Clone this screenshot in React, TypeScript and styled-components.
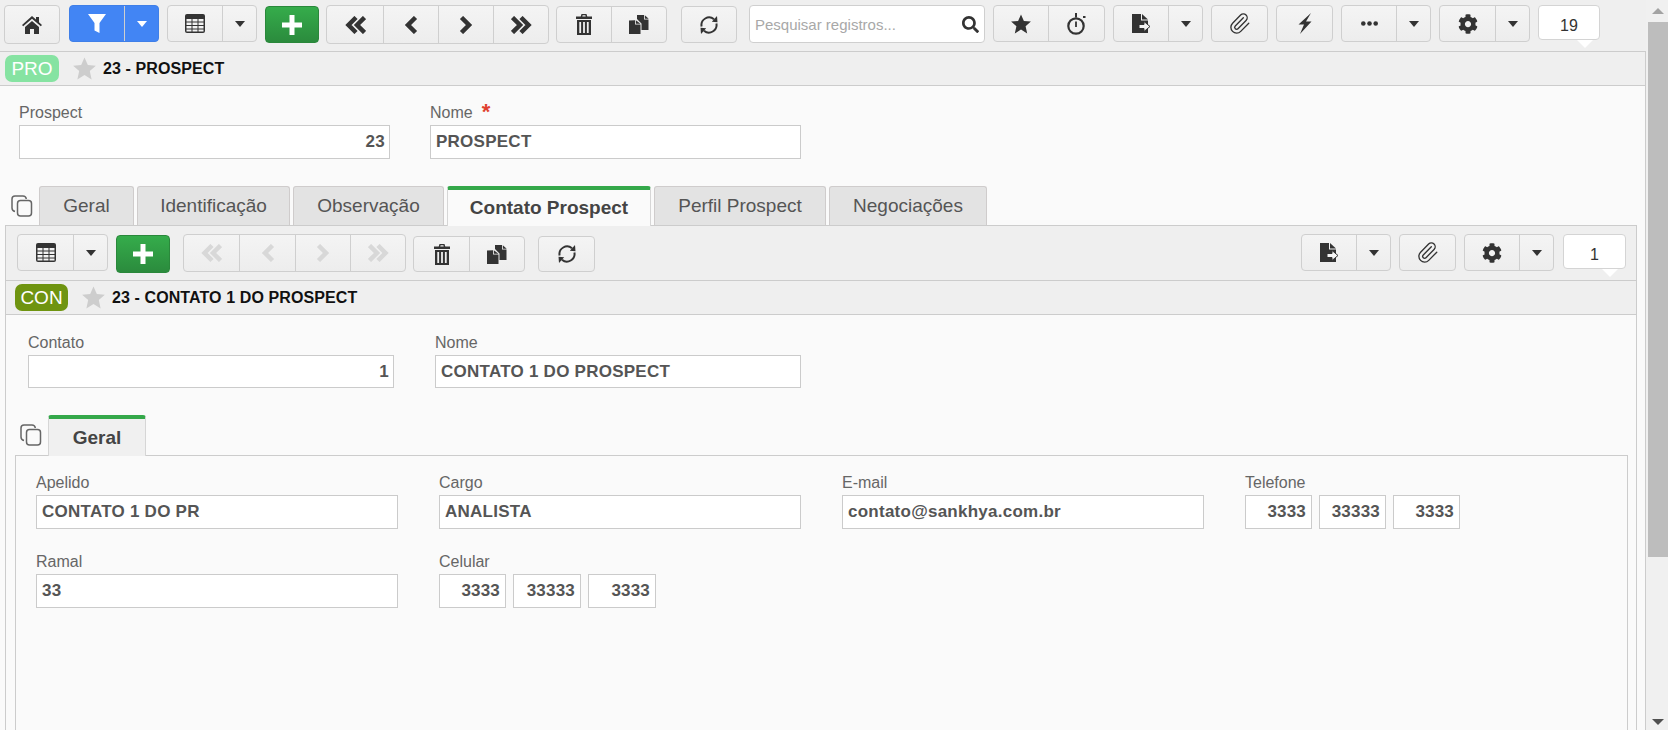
import React from "react";
import styled, { createGlobalStyle } from "styled-components";
import { FaSearch, FaCog } from "react-icons/fa";
import { Paperclip } from "lucide-react";

const GlobalStyle = createGlobalStyle`
  html, body { margin: 0; padding: 0; height: 730px; overflow: hidden; background: #fafafa; }
  body { font-family: "Liberation Sans", Arial, sans-serif; }
  * { box-sizing: border-box; }
`;

const Page = styled.div`
  display: flex;
  width: 1668px;
  height: 730px;
  overflow: hidden;
  background: #fafafa;
`;
const Main = styled.div`
  width: 1646px;
  height: 730px;
  display: flex;
  flex-direction: column;
  flex: none;
`;
const Scrollbar = styled.div`
  flex: 1;
  display: flex;
  flex-direction: column;
  align-items: center;
  background: #f0f0f0;
  padding: 8px 0 5px 2px;
`;
const ScrollArrow = styled.div<{ $down?: boolean }>`
  width: 0;
  height: 0;
  border-left: 6px solid transparent;
  border-right: 6px solid transparent;
  ${(p) => (p.$down ? "border-top: 6px solid #505050; margin-top: auto;" : "border-bottom: 6px solid #a3a3a3;")}
`;
const ScrollThumb = styled.div`
  width: 100%;
  height: 535px;
  margin-top: 8px;
  background: #bdbdbd;
`;

const Toolbar = styled.div`
  height: 51px;
  flex: none;
  display: flex;
  align-items: flex-start;
  background: #efefef;
  padding-left: 4px;
`;
const SubToolbar = styled.div`
  height: 54px;
  flex: none;
  display: flex;
  align-items: flex-start;
  background: #efefef;
  padding: 0 10px 0 0;
`;
const Group = styled.div<{ $ml: number; $top: number; $h: number }>`
  display: flex;
  flex: none;
  margin-left: ${(p) => p.$ml}px;
  margin-top: ${(p) => p.$top}px;
  height: ${(p) => p.$h}px;
  border: 1px solid #cfcfcf;
  border-radius: 4px;
  background: linear-gradient(#f4f4f4, #ededed);
  overflow: hidden;
`;
const PrimaryGroup = styled(Group)`
  background: #4285f4;
  border-color: #3f7fe8;
`;
const AddGroup = styled(Group)`
  background: linear-gradient(#35ac4b, #2b8b3d);
  border-color: #2a883b;
`;
const Cell = styled.div<{ $w: number; $line?: string }>`
  width: ${(p) => p.$w}px;
  display: flex;
  align-items: center;
  justify-content: center;
  color: #333;
  & + & { border-left: 1px solid ${(p) => p.$line || "#cfcfcf"}; }
`;
const Caret = styled.span<{ $light?: boolean }>`
  width: 0;
  height: 0;
  margin-top: 1px;
  border-left: 5.5px solid transparent;
  border-right: 5.5px solid transparent;
  border-top: 6px solid ${(p) => (p.$light ? "#fff" : "#333")};
`;
const SearchBox = styled.div<{ $ml: number }>`
  width: 236px;
  height: 38px;
  margin: 5px 0 0 ${(p) => p.$ml}px;
  flex: none;
  display: flex;
  align-items: center;
  padding: 0 5px;
  background: #fff;
  border: 1px solid #cfcfcf;
  border-radius: 4px;
  color: #333;
`;
const SearchInput = styled.input`
  flex: 1;
  min-width: 0;
  border: 0;
  outline: 0;
  padding: 0;
  background: transparent;
  font: 15px "Liberation Sans", Arial, sans-serif;
  &::placeholder { color: #a8a8a8; opacity: 1; }
`;
const Counter = styled.div<{ $ml: number; $w: number; $tip: number; $top: number }>`
  position: relative;
  flex: none;
  width: ${(p) => p.$w}px;
  height: 35px;
  margin: ${(p) => p.$top}px 0 0 ${(p) => p.$ml}px;
  padding-top: 7px;
  display: flex;
  align-items: center;
  justify-content: center;
  background: #fff;
  border: 1px solid #d4d4d4;
  border-radius: 4px;
  color: #333;
  font-size: 16px;
  &::after {
    content: "";
    position: absolute;
    left: ${(p) => p.$tip}px;
    bottom: -9px;
    width: 0;
    height: 0;
    border-left: 8px solid transparent;
    border-right: 8px solid transparent;
    border-top: 8px solid #fff;
  }
`;
const Spacer = styled.div`
  flex: 1;
`;

const Content = styled.div`
  flex: 1;
  min-height: 0;
  display: flex;
  flex-direction: column;
  border-right: 1px solid #ccc;
`;
const TitleBar = styled.div<{ $pl: number }>`
  height: 35px;
  flex: none;
  display: flex;
  align-items: center;
  padding-left: ${(p) => p.$pl}px;
  background: #efefef;
  border-top: 1px solid #ccc;
  border-bottom: 1px solid #ccc;
`;
const Badge = styled.span<{ $bg: string; $w: number }>`
  width: ${(p) => p.$w}px;
  height: 27px;
  flex: none;
  display: flex;
  align-items: center;
  justify-content: center;
  border-radius: 7px;
  background: ${(p) => p.$bg};
  color: #fff;
  font-size: 19px;
`;
const TitleStar = styled.span`
  display: flex;
  margin: 0 7px 0 14px;
  color: #cdcdcd;
`;
const Title = styled.span`
  font-size: 16px;
  font-weight: 700;
  color: #111;
  letter-spacing: 0.1px;
  white-space: nowrap;
`;
const FormRow = styled.div<{ $pl: number; $pt: number; $gap: number }>`
  flex: none;
  display: flex;
  gap: ${(p) => p.$gap}px;
  padding: ${(p) => p.$pt}px 0 27px ${(p) => p.$pl}px;
`;
const Field = styled.div<{ $w?: number }>`
  display: flex;
  flex-direction: column;
  ${(p) => (p.$w ? `width: ${p.$w}px;` : "")}
`;
const Label = styled.label`
  height: 19px;
  font-size: 16px;
  line-height: 14px;
  color: #666;
  white-space: nowrap;
`;
const Required = styled.span`
  margin-left: 9px;
  color: #e0402f;
  font-size: 22px;
  line-height: 12px;
  font-weight: 700;
  vertical-align: -1px;
`;
const TextInput = styled.input<{ $h?: number; $right?: boolean }>`
  width: 100%;
  height: ${(p) => p.$h || 34}px;
  padding: 0 4px 0 5px;
  border: 1px solid #cbcbcb;
  outline: 0;
  background: #fff;
  color: #555;
  font: 700 17px "Liberation Sans", Arial, sans-serif;
  letter-spacing: 0.25px;
  text-align: ${(p) => (p.$right ? "right" : "left")};
`;
const PhoneGroup = styled.div`
  display: flex;
  gap: 7px;
`;
const PhoneInput = styled(TextInput)<{ $w?: number }>`
  width: ${(p) => p.$w || 67}px;
  padding: 0 5px;
  letter-spacing: 0.2px;
`;
const TabBar = styled.div<{ $pl: number; $h: number }>`
  height: ${(p) => p.$h}px;
  flex: none;
  display: flex;
  align-items: flex-start;
  gap: 3px;
  padding-left: ${(p) => p.$pl}px;
  position: relative;
  z-index: 1;
`;
const TabsIcon = styled.span`
  display: flex;
  width: 25px;
  margin: 9px 0 0 0;
  color: #666;
`;
const Tab = styled.div<{ $w: number; $h: number; $active?: boolean; $activeBg?: string }>`
  width: ${(p) => p.$w}px;
  height: ${(p) => (p.$active ? p.$h + 1 : p.$h)}px;
  flex: none;
  display: flex;
  align-items: center;
  justify-content: center;
  font-size: 19px;
  color: ${(p) => (p.$active ? "#444" : "#555")};
  font-weight: ${(p) => (p.$active ? 700 : 400)};
  background: ${(p) => (p.$active ? p.$activeBg || "#fafafa" : "#e3e3e3")};
  border: 1px solid ${(p) => (p.$active ? "#d6d6d6" : "#cfcccc")};
  border-bottom: 0;
  border-top: ${(p) => (p.$active ? "4px solid #34a84a" : "1px solid #cfcccc")};
  border-radius: 3px 3px 0 0;
`;
const Panel = styled.div`
  flex: 1;
  min-height: 0;
  display: flex;
  flex-direction: column;
  margin: 0 8px 0 5px;
  border: 1px solid #ccc;
  border-bottom: 0;
`;
const InnerPanel = styled.div`
  flex: 1;
  min-height: 0;
  margin: 0 8px 0 9px;
  padding: 20px 0 0 20px;
  border: 1px solid #ccc;
  border-bottom: 0;
  display: grid;
  grid-template-columns: repeat(4, 362px);
  grid-auto-rows: min-content;
  gap: 26px 41px;
`;

const Ico = styled.svg`
  display: block;
  flex: none;
`;

const HomeIcon = () => (
  <Ico width="20" height="18" viewBox="0 0 20 18">
    <path fill="#333" d="M10 0l4 3.500V1h3v5.300l3 2.700-1.200 1.300L10 2.700 1.200 10.300 0 9z" />
    <path fill="#333" d="M3 11l7-6 7 6v7h-5v-5H8v5H3z" />
  </Ico>
);
const Star = ({ size, color }: { size: number; color: string }) => (
  <Ico width={size} height={size} viewBox="0 0 20 20">
    <path fill={color} d="M10 0.500 12.900 7 19.900 7.600 14.600 12.200 16.200 19.500 10 15.600 3.800 19.500 5.400 12.200 0.100 7.600 7.100 7z" />
  </Ico>
);
const Bolt = () => (
  <Ico width="14" height="21" viewBox="0 0 14 21">
    <path fill="#333" d="M13 0 0.500 11.500h5.500L2 21 13.500 8.500H8z" />
  </Ico>
);
const Funnel = () => (
  <Ico width="18" height="19" viewBox="0 0 18 19"><path fill="#fff" d="M0 0h18l-6.500 9v10l-5-2.500V9z" /></Ico>
);
const TableIcon = () => (
  <Ico width="20" height="19" viewBox="0 0 20 19">
    <rect x="0" y="0" width="20" height="19" rx="2" fill="#333" />
    <path fill="#f2f2f2" d="M1.500 5h5v2.500h-5zM7.500 5h5v2.500h-5zM13.500 5h5v2.500h-5zM1.500 8.500h5V11h-5zM7.500 8.500h5V11h-5zM13.500 8.500h5V11h-5zM1.500 12h5v2.500h-5zM7.500 12h5v2.500h-5zM13.500 12h5v2.500h-5zM1.500 15.500h5V17.500h-5zM7.500 15.500h5V17.500h-5zM13.500 15.500h5V17.500h-5z" />
  </Ico>
);
const Plus = () => (
  <Ico width="20" height="20" viewBox="0 0 20 20"><path fill="#fff" d="M7.500 0h5v7.500H20v5h-7.500V20h-5v-7.500H0v-5h7.500z" /></Ico>
);
const Chevrons = ({ dir, double, color }: { dir: "l" | "r"; double?: boolean; color: string }) => (
  <Ico
    width={double ? 21 : 14}
    height="18"
    viewBox={double ? "0 0 21 18" : "0 0 14 18"}
    style={dir === "r" ? { transform: "scaleX(-1)" } : undefined}
    fill="none"
    stroke={color}
    strokeWidth="4.500"
  >
    {double ? (
      <>
        <path d="M11 1.500 3.500 9l7.500 7.500" />
        <path d="M19.500 1.500 12 9l7.500 7.500" />
      </>
    ) : (
      <path d="M11.500 1.500 4 9l7.500 7.500" />
    )}
  </Ico>
);
const Trash = () => (
  <Ico width="16" height="21" viewBox="0 0 16 21">
    <path fill="#333" d="M5.500 0h5l.8 2.500H16V5H0V2.500h4.700zM6.600 1.200l-.3 1.300h3.400l-.3-1.300zM1 6h14v15H1zM3.300 8v11h1.800V8zM7.100 8v11h1.800V8zM10.900 8v11h1.800V8z" fillRule="evenodd" />
  </Ico>
);
const Files = () => (
  <Ico width="20" height="19" viewBox="0 0 20 19">
    <path fill="#333" d="M8 0h7v4.500h4.500V15H12.500V8.500L8 4z" />
    <path fill="#333" d="M15.800 0.200 19.700 3.700h-3.900z" />
    <path fill="#333" d="M0 5.500 6 5.200V9.500h5.500V19H0z" />
    <path fill="#333" d="M6.800 5.200 11.500 8.800h-4.700z" />
  </Ico>
);
const Refresh = () => (
  <Ico width="20" height="20" viewBox="0 0 20 20" fill="none">
    <path stroke="#333" strokeWidth="2" d="M2.600 11.500A7.600 7.600 0 0 1 15 4.300" />
    <path fill="#333" d="M12.800 6.800 18.500 7.200 18 1z" />
    <path stroke="#333" strokeWidth="2" d="M17.400 8.500A7.600 7.600 0 0 1 5 15.700" />
    <path fill="#333" d="M7.200 13.200 1.500 12.800 2 19z" />
  </Ico>
);
const Stopwatch = () => (
  <Ico width="19" height="22" viewBox="0 0 19 22" fill="none">
    <circle cx="9" cy="13" r="7.700" stroke="#333" strokeWidth="2.200" />
    <path stroke="#333" strokeWidth="2" d="M9 0v4.500" />
    <path stroke="#333" strokeWidth="1.800" d="M9 8.500v5.500" />
    <path fill="#333" d="M16 3l2.500 0 0 2-2.500 0z" />
  </Ico>
);
const ExportFile = () => (
  <Ico width="19" height="19" viewBox="0 0 19 19">
    <path fill="#333" d="M0 0h9v6.500h7V19H0z" />
    <path fill="#333" d="M10 0l6 5.500h-6z" />
    <path fill="#f4f4f4" stroke="#333" strokeWidth="1" d="M7 10.500h5V7.500l6 5-6 5v-3H7z" />
  </Ico>
);
const Dots = () => (
  <Ico width="17" height="5" viewBox="0 0 17 5">
    <circle cx="2.300" cy="2.500" r="2.300" fill="#333" />
    <circle cx="8.500" cy="2.500" r="2.300" fill="#333" />
    <circle cx="14.700" cy="2.500" r="2.300" fill="#333" />
  </Ico>
);
const CopyTabs = () => (
  <Ico width="22" height="22" viewBox="0 0 22 22" fill="none" stroke="#666" strokeWidth="1.500">
    <rect x="6.500" y="5.500" width="14" height="15.500" rx="3" />
    <path d="M4 16.500C2 16 1 15 1 13V4c0-2 1-3 3-3h8c2 0 3 1 3.300 3" />
  </Ico>
);

const clipIcon = <Paperclip size={23} strokeWidth={1.4} color="#333" />;
const D = "#d8d8d8";

export default function App() {
  return (
    <Page>
      <GlobalStyle />
      <Main>
        <Toolbar>
          <Group $ml={0} $top={5} $h={39}><Cell $w={54}><HomeIcon /></Cell></Group>
          <PrimaryGroup $ml={9} $top={5} $h={37}>
            <Cell $w={54} $line="#3272dd"><Funnel /></Cell>
            <Cell $w={34} $line="#3272dd"><Caret $light /></Cell>
          </PrimaryGroup>
          <Group $ml={8} $top={5} $h={37}>
            <Cell $w={54}><TableIcon /></Cell>
            <Cell $w={34}><Caret /></Cell>
          </Group>
          <AddGroup $ml={8} $top={6} $h={37}><Cell $w={52}><Plus /></Cell></AddGroup>
          <Group $ml={7} $top={5} $h={39}>
            <Cell $w={56}><Chevrons dir="l" double color="#333" /></Cell>
            <Cell $w={55}><Chevrons dir="l" color="#333" /></Cell>
            <Cell $w={55}><Chevrons dir="r" color="#333" /></Cell>
            <Cell $w={55}><Chevrons dir="r" double color="#333" /></Cell>
          </Group>
          <Group $ml={7} $top={6} $h={37}>
            <Cell $w={54}><Trash /></Cell>
            <Cell $w={55}><Files /></Cell>
          </Group>
          <Group $ml={14} $top={6} $h={37}><Cell $w={54}><Refresh /></Cell></Group>
          <SearchBox $ml={12}>
            <SearchInput placeholder="Pesquisar registros..." readOnly />
            <FaSearch size={17} />
          </SearchBox>
          <Group $ml={8} $top={5} $h={37}>
            <Cell $w={54}><Star size={20} color="#333" /></Cell>
            <Cell $w={56}><Stopwatch /></Cell>
          </Group>
          <Group $ml={8} $top={5} $h={37}>
            <Cell $w={54}><ExportFile /></Cell>
            <Cell $w={34}><Caret /></Cell>
          </Group>
          <Group $ml={8} $top={5} $h={37}><Cell $w={55}>{clipIcon}</Cell></Group>
          <Group $ml={8} $top={5} $h={37}><Cell $w={55}><Bolt /></Cell></Group>
          <Group $ml={8} $top={5} $h={37}>
            <Cell $w={54}><Dots /></Cell>
            <Cell $w={34}><Caret /></Cell>
          </Group>
          <Group $ml={8} $top={5} $h={37}>
            <Cell $w={55}><FaCog size={20} /></Cell>
            <Cell $w={34}><Caret /></Cell>
          </Group>
          <Counter $ml={8} $w={62} $tip={38} $top={5}>19</Counter>
        </Toolbar>
        <Content>
          <TitleBar $pl={5}>
            <Badge $bg="#86e3a2" $w={54}>PRO</Badge>
            <TitleStar><Star size={23} color="#cdcdcd" /></TitleStar>
            <Title>23 - PROSPECT</Title>
          </TitleBar>
          <FormRow $pl={19} $pt={20} $gap={40}>
            <Field $w={371}>
              <Label>Prospect</Label>
              <TextInput value="23" readOnly $right />
            </Field>
            <Field $w={371}>
              <Label>Nome<Required>*</Required></Label>
              <TextInput value="PROSPECT" readOnly />
            </Field>
          </FormRow>
          <TabBar $pl={11} $h={39}>
            <TabsIcon><CopyTabs /></TabsIcon>
            <Tab $h={39} $w={95}>Geral</Tab>
            <Tab $h={39} $w={153}>Identificação</Tab>
            <Tab $h={39} $w={151}>Observação</Tab>
            <Tab $h={39} $w={204} $active>Contato Prospect</Tab>
            <Tab $h={39} $w={172}>Perfil Prospect</Tab>
            <Tab $h={39} $w={158}>Negociações</Tab>
          </TabBar>
          <Panel>
            <SubToolbar>
              <Group $ml={11} $top={8} $h={37}>
                <Cell $w={55}><TableIcon /></Cell>
                <Cell $w={34}><Caret /></Cell>
              </Group>
              <AddGroup $ml={8} $top={9} $h={38}><Cell $w={52}><Plus /></Cell></AddGroup>
              <Group $ml={13} $top={8} $h={38}>
                <Cell $w={55}><Chevrons dir="l" double color={D} /></Cell>
                <Cell $w={56}><Chevrons dir="l" color={D} /></Cell>
                <Cell $w={55}><Chevrons dir="r" color={D} /></Cell>
                <Cell $w={55}><Chevrons dir="r" double color={D} /></Cell>
              </Group>
              <Group $ml={7} $top={10} $h={36}>
                <Cell $w={55}><Trash /></Cell>
                <Cell $w={55}><Files /></Cell>
              </Group>
              <Group $ml={13} $top={10} $h={36}><Cell $w={55}><Refresh /></Cell></Group>
              <Spacer />
              <Group $ml={0} $top={8} $h={37}>
                <Cell $w={54}><ExportFile /></Cell>
                <Cell $w={34}><Caret /></Cell>
              </Group>
              <Group $ml={8} $top={8} $h={37}><Cell $w={55}>{clipIcon}</Cell></Group>
              <Group $ml={8} $top={8} $h={37}>
                <Cell $w={54}><FaCog size={20} /></Cell>
                <Cell $w={34}><Caret /></Cell>
              </Group>
              <Counter $ml={9} $w={63} $tip={38} $top={8}>1</Counter>
            </SubToolbar>
            <TitleBar $pl={9}>
              <Badge $bg="#6f9410" $w={53}>CON</Badge>
              <TitleStar><Star size={23} color="#cdcdcd" /></TitleStar>
              <Title>23 - CONTATO 1 DO PROSPECT</Title>
            </TitleBar>
            <FormRow $pl={22} $pt={21} $gap={41}>
              <Field $w={366}>
                <Label>Contato</Label>
                <TextInput value="1" readOnly $right $h={33} />
              </Field>
              <Field $w={366}>
                <Label>Nome</Label>
                <TextInput value="CONTATO 1 DO PROSPECT" readOnly $h={33} />
              </Field>
            </FormRow>
            <TabBar $pl={14} $h={40}>
              <TabsIcon><CopyTabs /></TabsIcon>
              <Tab $h={40} $w={98} $active $activeBg="#f0f0f0">Geral</Tab>
            </TabBar>
            <InnerPanel>
              <Field>
                <Label>Apelido</Label>
                <TextInput value="CONTATO 1 DO PR" readOnly />
              </Field>
              <Field>
                <Label>Cargo</Label>
                <TextInput value="ANALISTA" readOnly />
              </Field>
              <Field>
                <Label>E-mail</Label>
                <TextInput value="contato@sankhya.com.br" readOnly />
              </Field>
              <Field>
                <Label>Telefone</Label>
                <PhoneGroup>
                  <PhoneInput value="3333" readOnly $right />
                  <PhoneInput value="33333" readOnly $right />
                  <PhoneInput value="3333" readOnly $right />
                </PhoneGroup>
              </Field>
              <Field>
                <Label>Ramal</Label>
                <TextInput value="33" readOnly />
              </Field>
              <Field>
                <Label>Celular</Label>
                <PhoneGroup>
                  <PhoneInput value="3333" readOnly $right />
                  <PhoneInput value="33333" readOnly $right $w={68} />
                  <PhoneInput value="3333" readOnly $right $w={68} />
                </PhoneGroup>
              </Field>
            </InnerPanel>
          </Panel>
        </Content>
      </Main>
      <Scrollbar>
        <ScrollArrow />
        <ScrollThumb />
        <ScrollArrow $down />
      </Scrollbar>
    </Page>
  );
}
